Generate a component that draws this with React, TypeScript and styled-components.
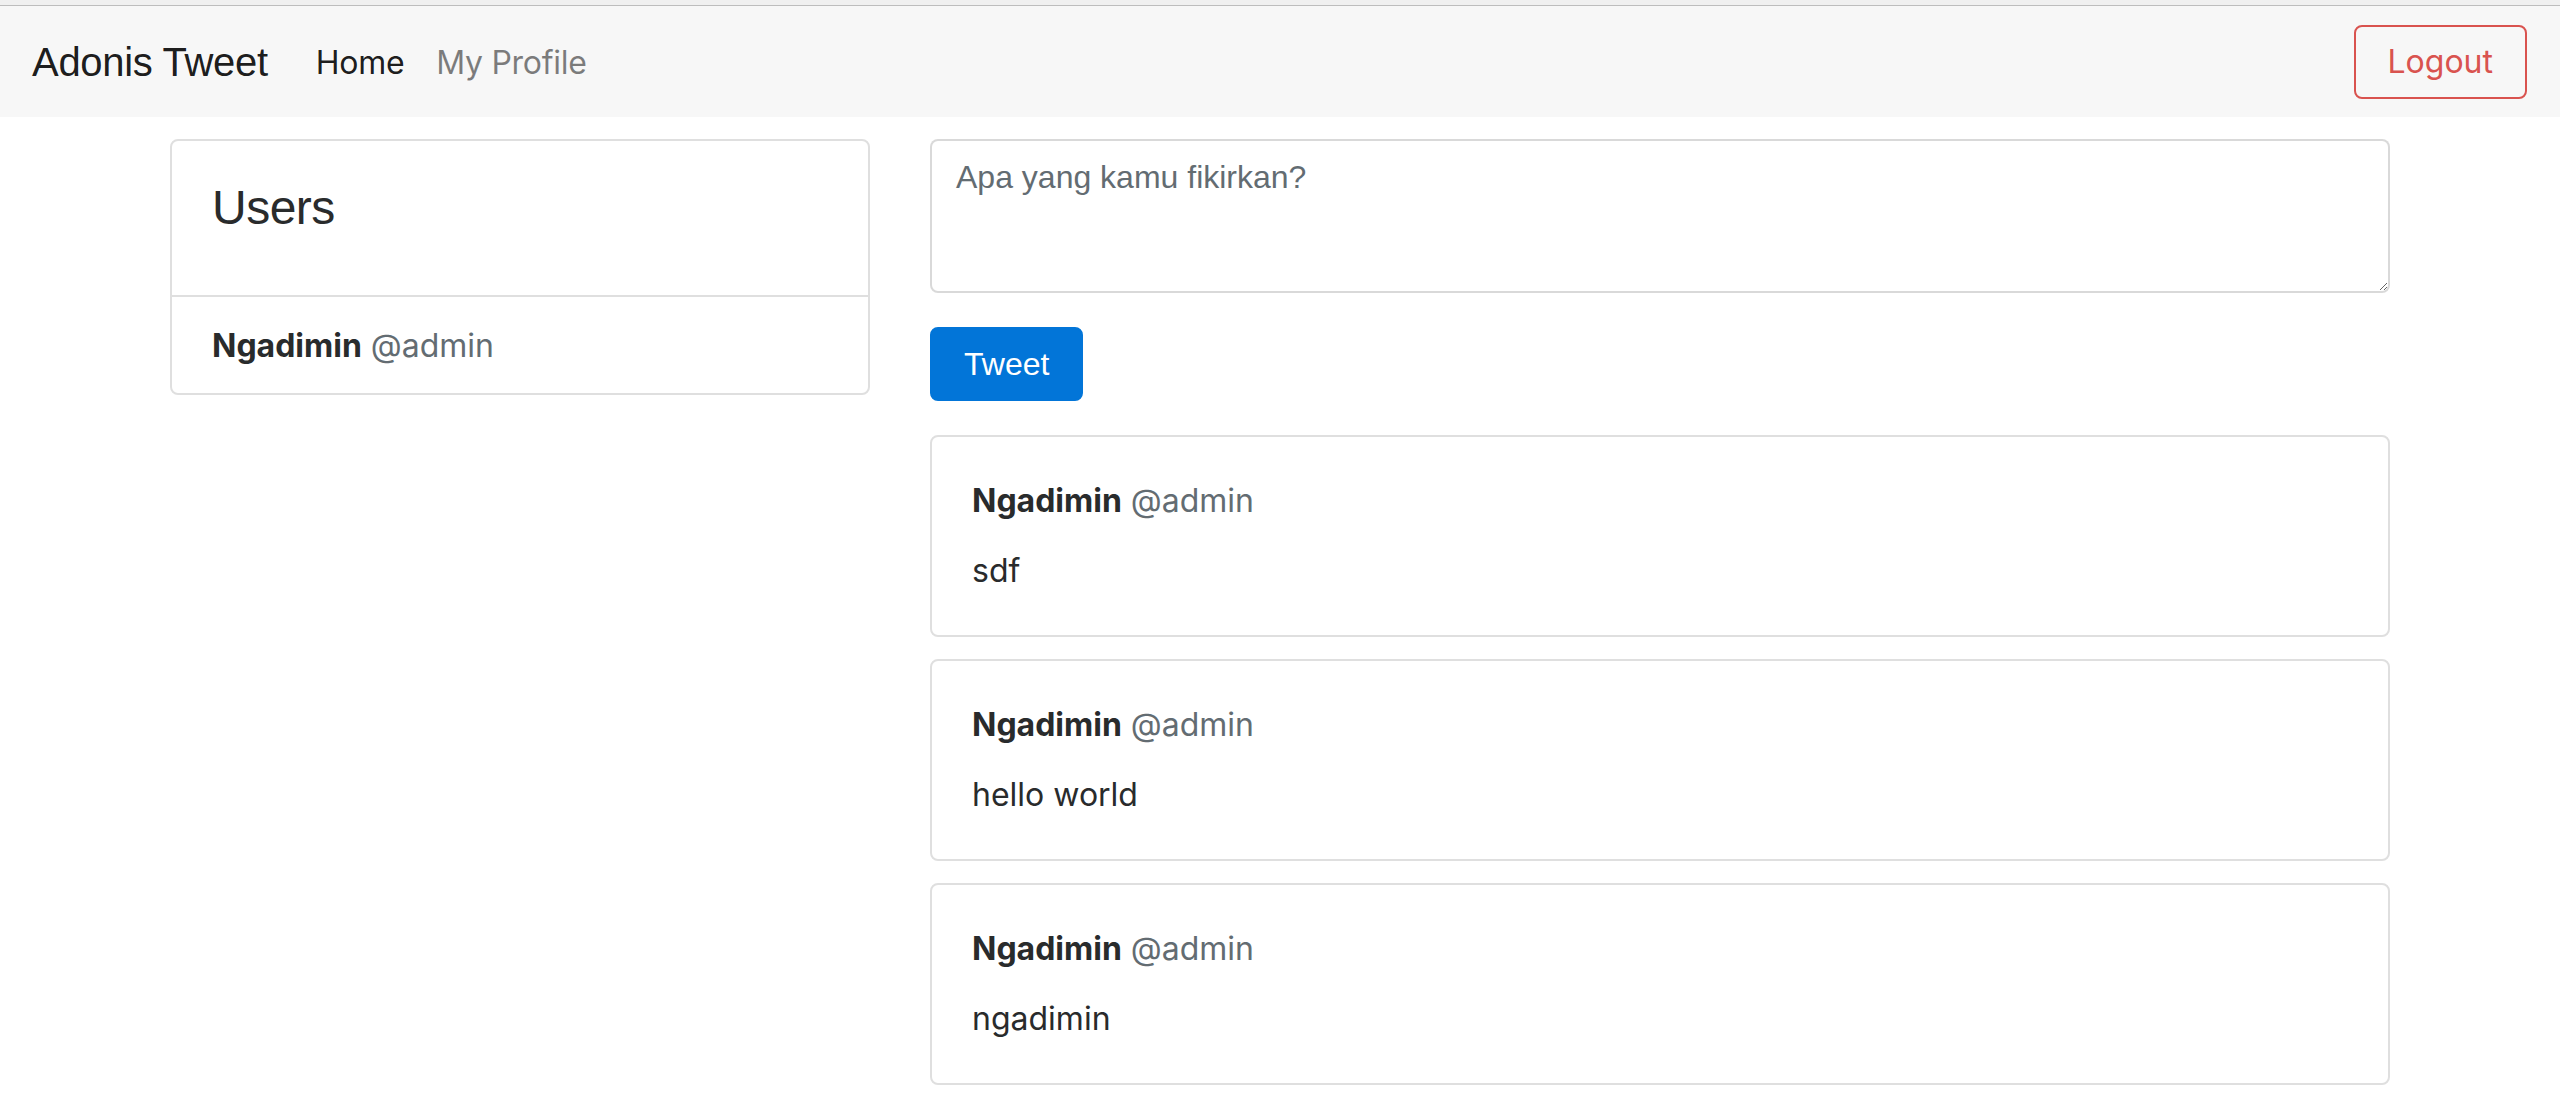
import React from "react";
import styled, { createGlobalStyle } from "styled-components";

const GlobalStyle = createGlobalStyle`
  html, body {
    margin: 0;
    padding: 0;
    background: #ffffff;
  }
  body {
    font-family: "Liberation Sans", Arial, sans-serif;
    color: #292b2c;
  }
  * { box-sizing: border-box; }
`;

const SANS = `"Liberation Sans", Arial, sans-serif`;
const UI = `Inter, "Noto Sans", sans-serif`;

const Page = styled.div`
  min-height: 1102px;
  background: #ffffff;
`;

const TopEdge = styled.div`
  height: 6px;
  background: #f0f0f0;
  border-bottom: 1px solid #bdbdbd;
`;

const Navbar = styled.nav`
  height: 111px;
  background: #f7f7f7;
  display: flex;
  align-items: center;
  padding: 0 33px 0 32px;
`;

const Brand = styled.a`
  font-family: ${SANS};
  font-size: 40px;
  line-height: 60px;
  letter-spacing: -0.3px;
  color: rgba(0, 0, 0, 0.9);
  text-decoration: none;
  margin-right: 32px;
`;

const NavLinks = styled.div`
  display: flex;
  align-items: center;
  flex: 1;
`;

const NavLink = styled.a<{ $active?: boolean }>`
  font-family: ${UI};
  font-size: 32px;
  line-height: 48px;
  letter-spacing: -0.3px;
  padding: 2px 16px 0;
  color: ${(p) => (p.$active ? "rgba(0,0,0,0.9)" : "rgba(0,0,0,0.5)")};
  text-decoration: none;
`;

const LogoutButton = styled.button`
  font-family: ${UI};
  font-size: 32px;
  line-height: 40px;
  padding: 15px 32px;
  color: #d9534f;
  background: transparent;
  border: 2px solid #d9534f;
  border-radius: 8px;
  cursor: pointer;
`;

const Container = styled.main`
  max-width: 2280px;
  margin: 0 auto;
  padding: 22px 30px 0;
  display: grid;
  grid-template-columns: 700px 1fr;
  column-gap: 60px;
  align-items: start;
`;

const Card = styled.div`
  border: 2px solid #dfdfdf;
  border-radius: 8px;
  background: #ffffff;
`;

const UsersHeader = styled.div`
  padding: 38px 40px 58px;
`;

const UsersTitle = styled.h4`
  margin: 0;
  font-family: ${SANS};
  font-weight: 400;
  font-size: 48px;
  line-height: 58px;
  letter-spacing: -0.5px;
  color: #292b2c;
`;

const ListItem = styled.div`
  border-top: 2px solid #dfdfdf;
  padding: 25px 40px 23px;
  font-family: ${UI};
  font-size: 32px;
  line-height: 48px;
`;

const Name = styled.strong`
  font-weight: 700;
  color: #292b2c;
`;

const Handle = styled.span`
  color: #636c72;
`;

const Feed = styled.section`
  display: flex;
  flex-direction: column;
`;

const TweetInput = styled.textarea`
  display: block;
  width: 100%;
  height: 154px;
  padding: 16px 24px;
  font-family: ${SANS};
  font-size: 32px;
  line-height: 40px;
  color: #464a4c;
  border: 2px solid rgba(0, 0, 0, 0.15);
  border-radius: 8px;
  background: #ffffff;
  outline: none;
  margin: 0 0 34px;

  &::placeholder {
    color: #636c72;
    opacity: 1;
  }
`;

const TweetButton = styled.button`
  align-self: flex-start;
  font-family: ${SANS};
  font-size: 32px;
  line-height: 40px;
  padding: 15px 32px;
  color: #ffffff;
  background: #0275d8;
  border: 2px solid #0275d8;
  border-radius: 8px;
  margin-bottom: 34px;
  cursor: pointer;
`;

const TweetList = styled.div`
  display: flex;
  flex-direction: column;
  gap: 22px;
`;

const TweetBody = styled.div`
  padding: 40px;
  font-family: ${UI};
  font-size: 32px;
  line-height: 48px;
`;

const TweetAuthor = styled.p`
  margin: 0 0 22px;
`;

const TweetText = styled.p`
  margin: 0;
  color: #292b2c;
`;

const tweets = ["sdf", "hello world", "ngadimin"];

export default function App() {
  return (
    <>
      <GlobalStyle />
      <Page>
        <TopEdge />
        <Navbar>
          <Brand href="#">Adonis Tweet</Brand>
          <NavLinks>
            <NavLink href="#" $active>
              Home
            </NavLink>
            <NavLink href="#">My Profile</NavLink>
          </NavLinks>
          <LogoutButton>Logout</LogoutButton>
        </Navbar>
        <Container>
          <Card>
            <UsersHeader>
              <UsersTitle>Users</UsersTitle>
            </UsersHeader>
            <ListItem>
              <Name>Ngadimin</Name> <Handle>@admin</Handle>
            </ListItem>
          </Card>
          <Feed>
            <TweetInput placeholder="Apa yang kamu fikirkan?" />
            <TweetButton>Tweet</TweetButton>
            <TweetList>
              {tweets.map((t, i) => (
                <Card key={i}>
                  <TweetBody>
                    <TweetAuthor>
                      <Name>Ngadimin</Name> <Handle>@admin</Handle>
                    </TweetAuthor>
                    <TweetText>{t}</TweetText>
                  </TweetBody>
                </Card>
              ))}
            </TweetList>
          </Feed>
        </Container>
      </Page>
    </>
  );
}
